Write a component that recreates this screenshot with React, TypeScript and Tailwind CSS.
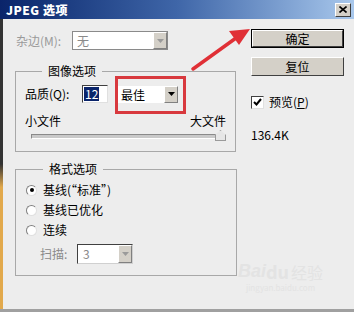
import React from "react";

const font = { fontFamily: '"Noto Sans CJK SC", "Liberation Sans", sans-serif' };

const ArrowBtn = ({ disabled }: { disabled?: boolean }) => (
  <div className="w-[14px] h-full flex items-center justify-center bg-[#d4d0c8] border border-t-white border-l-white border-r-[#808080] border-b-[#808080]">
    <svg width="7" height="4" viewBox="0 0 7 4">
      <path d="M0 0h7L3.5 4z" fill={disabled ? "#9a9a9a" : "#000"} />
    </svg>
  </div>
);

const Radio = ({ checked, label }: { checked?: boolean; label: string }) => (
  <div className="flex items-center gap-[6px] h-[20px]">
    <div className="w-[11px] h-[11px] rounded-full bg-white border border-t-[#808080] border-l-[#808080] border-r-[#e0e0e0] border-b-[#e0e0e0] flex items-center justify-center">
      {checked && <div className="w-[4px] h-[4px] rounded-full bg-black" />}
    </div>
    <span className="text-[12px] text-black">{label}</span>
  </div>
);

export default function App() {
  return (
    <div className="relative w-[354px] h-[312px] bg-[#ededed] overflow-hidden border-b-[3px] border-[#a0a0a0]" style={font}>
      {/* title bar */}
      <div className="h-[19px] flex items-center justify-between pl-[6px] pr-[3px] bg-gradient-to-r from-[#0a246a] via-[#3f66a8] to-[#a9c8ec]">
        <span className="text-white text-[12px] font-black leading-none tracking-[0.5px]">JPEG 选项</span>
        <div className="w-[16px] h-[14px] bg-[#d4d0c8] border border-t-white border-l-white border-r-[#404040] border-b-[#404040] flex items-center justify-center">
          <svg width="8" height="7" viewBox="0 0 8 7">
            <path d="M0.5 0.5L7.5 6.5M7.5 0.5L0.5 6.5" stroke="#000" strokeWidth="1.6" />
          </svg>
        </div>
      </div>

      <div className="flex">
        {/* left column */}
        <div className="w-[240px] pl-[15px] pt-[12px]">
          <div className="flex items-center h-[19px]">
            <span className="w-[57px] text-[12px] text-[#9a9a9a] pl-[1px]">杂边(M):</span>
            <div className="w-[96px] h-[19px] flex bg-white border border-[#8a8a8a]">
              <span className="flex-1 text-[12px] leading-[17px] text-[#8a8a8a] pl-[4px]">无</span>
              <ArrowBtn disabled />
            </div>
          </div>

          <fieldset className="mt-[14px] w-[221px] h-[88px] border border-[#a8a8a8] pl-[9px] pr-[9px]">
            <legend className="ml-[17px] px-[6px] text-[12px] leading-[14px] text-black">图像选项</legend>
            <div className="flex items-center h-[18px] mt-[7px]">
              <span className="w-[57px] text-[12px] text-black">品质(Q):</span>
              <div className="w-[26px] h-[18px] bg-white border border-t-[#404040] border-l-[#404040] border-r-[#e0e0e0] border-b-[#e0e0e0] pl-[1px] flex items-center">
                <span className="bg-[#0a246a] text-white text-[12px] leading-[14px] px-[1px]">12</span>
              </div>
              <div className="ml-[10px] w-[60px] h-[17px] flex bg-white">
                <span className="flex-1 text-[12px] leading-[17px] text-black pl-[3px]">最佳</span>
                <ArrowBtn />
              </div>
            </div>
            <div className="flex justify-between mt-[12px] text-[12px] leading-[12px] text-black">
              <span>小文件</span>
              <span>大文件</span>
            </div>
            <div className="relative mt-[7px] ml-[6px] mr-[1px] h-[5px] bg-[#c9c9c9] border border-t-[#8a8a8a] border-l-[#8a8a8a] border-r-white border-b-white">
              <div className="absolute right-[-2px] top-[-5px] w-[11px] h-[11px] bg-[#e6e6e6] border border-[#9a9a9a] [clip-path:polygon(50%_0,100%_45%,100%_100%,0_100%,0_45%)]" />
            </div>
          </fieldset>

          <fieldset className="mt-[10px] w-[222px] h-[114px] border border-[#a8a8a8] pl-[10px]">
            <legend className="ml-[17px] px-[6px] text-[12px] leading-[14px] text-black">格式选项</legend>
            <div className="mt-[4px]">
              <Radio checked label="基线(“标准”)" />
              <Radio label="基线已优化" />
              <Radio label="连续" />
            </div>
            <div className="flex items-center mt-[4px] pl-[14px]">
              <span className="w-[37px] text-[12px] text-[#8a8a8a]">扫描:</span>
              <div className="w-[56px] h-[20px] flex bg-white border border-t-[#404040] border-l-[#404040] border-r-[#d0d0d0] border-b-[#d0d0d0]">
                <span className="flex-1 text-[12px] leading-[18px] text-[#8a8a8a] pl-[5px]">3</span>
                <ArrowBtn disabled />
              </div>
            </div>
          </fieldset>
        </div>

        {/* right column */}
        <div className="pl-[11px] pt-[10px] w-[104px]">
          <div className="w-[93px] h-[19px] border border-black flex">
            <div className="flex-1 bg-[#d4d0c8] border border-t-white border-l-white border-r-[#404040] border-b-[#404040] flex items-center justify-center text-[12px] text-black">确定</div>
          </div>
          <div className="mt-[9px] w-[93px] h-[19px] bg-[#d4d0c8] border border-t-white border-l-white border-r-[#404040] border-b-[#404040] flex items-center justify-center text-[12px] text-black">复位</div>
          <div className="mt-[17px] flex items-center gap-[5px]">
            <div className="w-[13px] h-[13px] bg-white border border-t-[#404040] border-l-[#404040] border-r-[#e0e0e0] border-b-[#e0e0e0] flex items-center justify-center">
              <svg width="9" height="8" viewBox="0 0 9 8">
                <path d="M1 4l2.5 2.5L8 1" stroke="#000" strokeWidth="2" fill="none" />
              </svg>
            </div>
            <span className="text-[12px] text-black">预览(<span className="underline">P</span>)</span>
          </div>
          <div className="mt-[15px] text-[12px] text-black">136.4K</div>
        </div>
      </div>

      {/* left screen edge */}
      <div className="absolute left-0 top-[19px] bottom-0 w-[3px] bg-[linear-gradient(to_bottom,#333_0,#333_50%,#e2a94c_58%,#e2a94c_100%)]" />

      {/* red annotation box */}
      <div className="absolute left-[115px] top-[76px] w-[71px] h-[38px] border-[3px] border-[#d8393e]" />

      {/* red arrow */}
      <svg className="absolute left-0 top-0" width="354" height="312" viewBox="0 0 354 312">
        <path d="M193 69L236 38" stroke="#e03036" strokeWidth="3.5" strokeLinecap="round" />
        <path d="M250 29L229 31L239 45z" fill="#e03036" />
      </svg>

      {/* watermark */}
      <div className="absolute left-[238px] top-[262px] flex flex-col items-center text-[#e3e3e3]">
        <div className="flex items-end">
          <span className="text-[18px] font-bold italic leading-none" style={{ fontFamily: '"Liberation Sans", sans-serif' }}>Bai</span>
          <span className="text-[18px] font-bold leading-none">du</span>
          <span className="text-[16px] leading-none ml-[2px]">经验</span>
        </div>
        <span className="text-[8px] leading-none mt-[4px]">jingyan.baidu.com</span>
      </div>
    </div>
  );
}
